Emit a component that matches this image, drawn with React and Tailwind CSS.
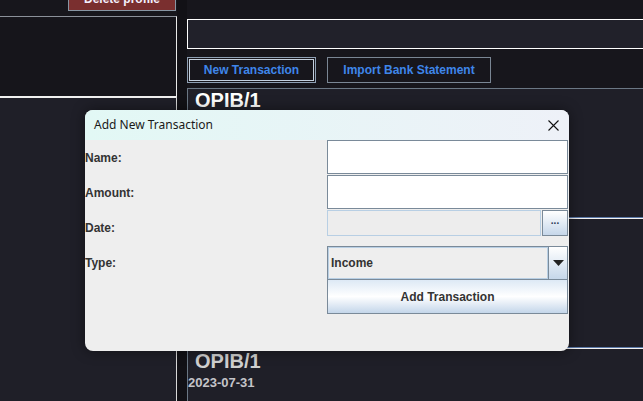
import { useState } from 'react';

const sans = { fontFamily: '"Liberation Sans", Arial, sans-serif' };

function Field({ className = '' }) {
  return <div className={`h-[34px] border border-[#7a8a99] bg-white ${className}`} />;
}

function Row({ label, height, children }) {
  return (
    <div className="flex" style={{ height }}>
      <div className="w-[242px] flex items-center text-[12px] font-bold text-[#333333]">{label}</div>
      <div className="w-[241px]">{children}</div>
    </div>
  );
}

function AddTransactionDialog() {
  const [type] = useState('Income');
  return (
    <div className="absolute left-[85px] top-[110px] w-[484px] h-[241px] rounded-[8px] overflow-hidden bg-[#eeeeee] shadow-[0_0_14px_rgba(0,0,0,0.45)]">
      <div className="h-[30px] flex items-center justify-between pl-[9px] pr-[9px] bg-gradient-to-r from-[#e2f8f5] to-[#eef1f8]">
        <span className="text-[12px] text-[#1a1a1a]" style={{ fontFamily: '"Noto Sans", "Open Sans", sans-serif' }}>
          Add New Transaction
        </span>
        <svg width="11" height="11" viewBox="0 0 11 11" className="mr-[1px]">
          <path d="M0.5 0.5 L10.5 10.5 M10.5 0.5 L0.5 10.5" stroke="#111" strokeWidth="1.1" fill="none" />
        </svg>
      </div>
      <div style={sans}>
        <Row label="Name:" height={35}>
          <Field />
        </Row>
        <Row label="Amount:" height={35}>
          <Field />
        </Row>
        <Row label="Date:" height={36}>
          <div className="flex gap-[1px]">
            <div className="w-[214px] h-[26px] border border-[#b8cfe4] bg-[#ededed]" />
            <div className="w-[26px] h-[26px] border border-[#7a8a99] bg-gradient-to-b from-[#ffffff] to-[#c6d7ea] flex items-center justify-center">
              <span className="text-[10px] font-bold leading-none text-[#2d3a55] -mt-[4px]">...</span>
            </div>
          </div>
        </Row>
        <Row label="Type:" height={34}>
          <div className="h-[34px] flex border border-[#7a8a99] bg-[#eeeeee]">
            <div className="flex-1 flex items-center pl-[2px] border border-[#b8cfe4] text-[12px] font-bold text-[#333333]">
              {type}
            </div>
            <div className="w-[19px] flex items-center justify-center border-l border-[#7a8a99] bg-gradient-to-b from-[#ffffff] to-[#c6d7ea]">
              <svg width="11" height="6" viewBox="0 0 11 6">
                <path d="M0 0 H11 L5.5 6 Z" fill="#222" />
              </svg>
            </div>
          </div>
        </Row>
        <Row label="" height={34}>
          <div className="h-[34px] flex items-center justify-center border border-t-0 border-[#7a8a99] bg-gradient-to-b from-[#dde9f5] via-[#ffffff] to-[#c4d6ea] text-[12px] font-bold text-[#333333]">
            Add Transaction
          </div>
        </Row>
      </div>
    </div>
  );
}

function Card({ title, date, bright, borderTop, borderBottom, height }) {
  return (
    <div className={`shrink-0 border-l border-[#6b7784] ${borderTop} ${borderBottom}`} style={{ height }}>
      <div className={`pl-[7px] text-[20px] leading-[23px] font-bold ${bright ? 'text-white' : 'text-[#d0d0d0] mt-[1px]'}`}>{title}</div>
      {date && <div className="mt-[2px] text-[13px] leading-[15px] font-bold text-[#c4c4c8]">{date}</div>}
    </div>
  );
}

export default function App() {
  return (
    <div className="relative w-[643px] h-[401px] overflow-hidden bg-[#17161c] flex" style={sans}>
      <div className="w-[177px] shrink-0 flex flex-col">
        <div className="h-[16px] shrink-0 relative">
          <div className="absolute left-[68px] top-[-13px] w-[108px] h-[24px] border border-[#8795a3] bg-[#7a2f2f] flex items-center justify-center text-[12px] font-bold text-[#f4f0ff]">
            Delete profile
          </div>
        </div>
        <div className="h-[80px] shrink-0 border-t border-r border-t-[#8b9099] border-r-[#e8e8e8] bg-[#16151b]" />
        <div className="flex-1 border-t-2 border-r border-t-[#f0f0f0] border-r-[#d8d8d8] bg-[#1f1f28]" />
      </div>
      <div className="w-[10px] shrink-0 bg-[#121116]" />
      <div className="w-[460px] shrink-0 flex flex-col pt-[19px] bg-[#17161c]">
        <div className="h-[30px] shrink-0 border border-white bg-[#21212a]" />
        <div className="flex shrink-0 gap-[11px] mt-[8px] h-[26px]">
          <div className="w-[129px] border border-[#8fa0b4] p-[1px]">
            <div className="h-full border border-[#c4d0de] flex items-center justify-center text-[12px] font-bold text-[#3f86ea]">
              New Transaction
            </div>
          </div>
          <div className="w-[164px] border border-[#7a8694] flex items-center justify-center text-[12px] font-bold text-[#3f86ea]">
            Import Bank Statement
          </div>
        </div>
        <div className="mt-[5px] flex-1 flex flex-col bg-[#1f1f28] overflow-hidden">
          <Card title="OPIB/1" bright borderTop="border-t border-t-[#6b7784]" borderBottom="border-b border-b-[#5a78a8]" height={130} />
          <Card title="OPIB/1" bright borderTop="border-t border-t-[#f2f2f2]" borderBottom="border-b border-b-[#5a78a8]" height={130} />
          <Card title="OPIB/1" date="2023-07-31" borderTop="border-t border-t-[#f2f2f2]" borderBottom="" height={60} />
        </div>
      </div>
      <AddTransactionDialog />
    </div>
  );
}
